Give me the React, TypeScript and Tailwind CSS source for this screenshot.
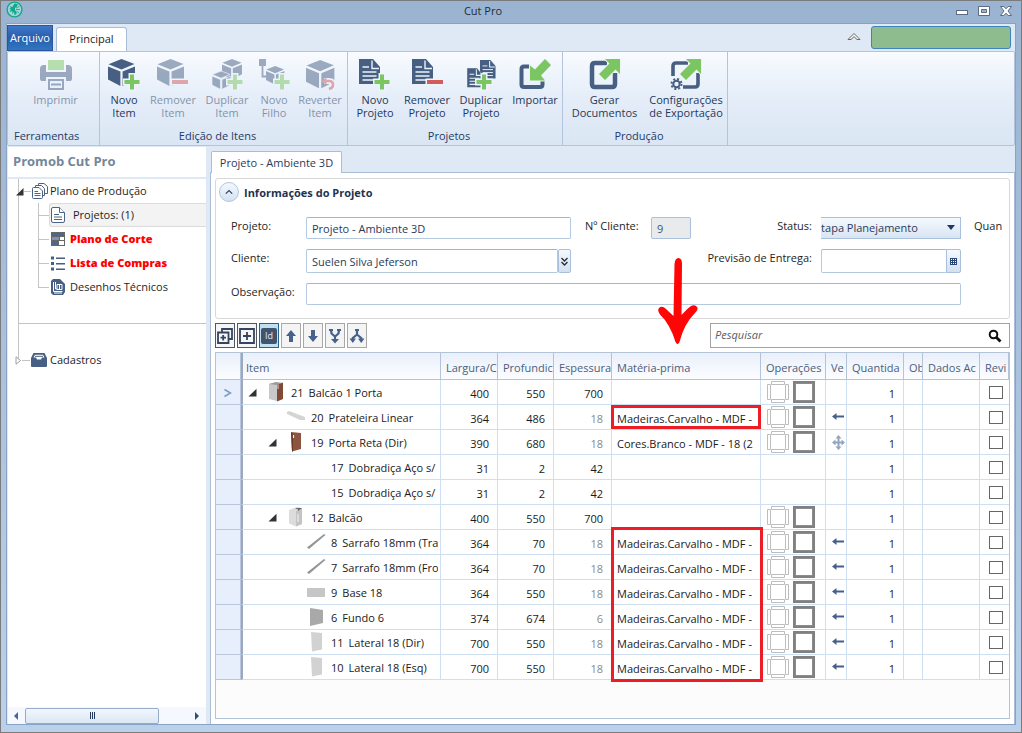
import React from "react";

const NAVY = "#465f82";
const GREEN = "#7cc662";
const RED = "#d25c5c";

function Plus({ x, y }: { x: number; y: number }) {
  return (
    <g transform={`translate(${x} ${y})`}>
      <path d="M-2 -7.5H2V-2H7.5V2H2V7.5H-2V2H-7.5V-2H-2Z" fill={GREEN} stroke="#edf3fb" strokeWidth="3" paintOrder="stroke" />
    </g>
  );
}

function Minus({ x, y }: { x: number; y: number }) {
  return <rect x={x} y={y} width="16" height="4" fill={RED} stroke="#edf3fb" strokeWidth="3" paintOrder="stroke" />;
}

function Cube({ t = "" }: { t?: string }) {
  return (
    <g transform={t} fill={NAVY}>
      <path d="M0.5 5.2L13.5 0L26.5 5L13.5 10.6Z" />
      <path d="M0 7.4L12.4 12.6V27L0 20.6Z" />
      <path d="M14.6 12.6L27 7.4V20.6L14.6 27Z" />
    </g>
  );
}

function Doc({ t = "" }: { t?: string }) {
  return (
    <g transform={t}>
      <path d="M0 0H14L21 8V25H0Z" fill={NAVY} />
      <path d="M13 1.5V9.5H20" fill="none" stroke="#edf3fb" strokeWidth="1.4" />
      <path d="M3.5 8H10M3.5 13H17.5M3.5 17H17.5M3.5 21H17.5" stroke="#edf3fb" strokeWidth="1.3" />
    </g>
  );
}

function BigIcon({ children }: { children: React.ReactNode }) {
  return (
    <svg className="h-8 w-8 shrink-0" viewBox="0 0 32 32" aria-hidden="true">
      {children}
    </svg>
  );
}

const icons = {
  print: (
    <BigIcon>
      <path d="M8 1H24V11H8Z" fill={GREEN} />
      <path d="M0 10Q0 6 4 6H6V13H26V6H28Q32 6 32 10V20Q32 22 30 22H26V18H6V22H2Q0 22 0 20Z" fill={NAVY} />
      <path d="M9 21H23V30H9Z" fill="none" stroke={NAVY} strokeWidth="2" />
      <path d="M11 25.5H21" stroke={NAVY} strokeWidth="2" />
    </BigIcon>
  ),
  newItem: (
    <BigIcon>
      <Cube />
      <Plus x={24} y={23} />
    </BigIcon>
  ),
  removeItem: (
    <BigIcon>
      <Cube />
      <Minus x={15} y={21} />
    </BigIcon>
  ),
  duplicateItem: (
    <BigIcon>
      <Cube t="translate(11 0) scale(0.74)" />
      <g stroke="#edf3fb" strokeWidth="1">
        <Cube t="translate(1 12) scale(0.68)" />
      </g>
      <Plus x={24} y={23} />
    </BigIcon>
  ),
  newChild: (
    <BigIcon>
      <rect x="1" y="0" width="7" height="7" fill={NAVY} />
      <path d="M4.5 7V17.5H9" fill="none" stroke={NAVY} strokeWidth="1.8" />
      <Cube t="translate(8 7) scale(0.68)" />
      <Plus x={24} y={23} />
    </BigIcon>
  ),
  revert: (
    <BigIcon>
      <Cube t="translate(2 1) scale(1.05)" />
      <path d="M20 22H25Q29 22 29 25.5Q29 29 25 30" fill="none" stroke="#edf3fb" strokeWidth="6" />
      <path d="M20 22H25Q29 22 29 25.5Q29 29 25 30" fill="none" stroke={RED} strokeWidth="2.6" />
      <path d="M22.5 18L17.5 22.2L22.5 26Z" fill={RED} />
    </BigIcon>
  ),
  newProject: (
    <BigIcon>
      <Doc />
      <Plus x={23} y={23} />
    </BigIcon>
  ),
  removeProject: (
    <BigIcon>
      <Doc t="translate(1 0)" />
      <Minus x={16} y={21} />
    </BigIcon>
  ),
  duplicateProject: (
    <BigIcon>
      <Doc t="translate(15 1) scale(0.74)" />
      <g stroke="#edf3fb" strokeWidth="0.6">
        <Doc t="translate(2 9) scale(0.72 0.78)" />
      </g>
      <Plus x={19} y={23} />
    </BigIcon>
  ),
  importIcon: (
    <BigIcon>
      <path d="M11 7.5H5Q2.5 7.5 2.5 10V25.5Q2.5 28 5 28H21Q23.5 28 23.5 25.5V21" fill="none" stroke={NAVY} strokeWidth="4" />
      <path d="M26 0L32 6L22 16.5L26 21.5H11V6.5L16 10.5Z" fill={GREEN} stroke="#edf3fb" strokeWidth="2" paintOrder="stroke" />
    </BigIcon>
  ),
  exportIcon: (
    <BigIcon>
      <path d="M18 4H6Q3 4 3 7V25Q3 28 6 28H23Q26 28 26 25V14" fill="none" stroke={NAVY} strokeWidth="4.5" />
      <path d="M16 0H31V15L26.5 10.5L16 21L10 15L20.5 4.5Z" fill={GREEN} stroke="#edf3fb" strokeWidth="2" paintOrder="stroke" />
    </BigIcon>
  ),
  exportConfig: (
    <BigIcon>
      <path d="M18 4H6Q3 4 3 7V17M13 28H25Q28 28 28 25V14" fill="none" stroke={NAVY} strokeWidth="3.6" />
      <path d="M16 0H31V15L26.5 10.5L16 21L10 15L20.5 4.5Z" fill={GREEN} stroke="#edf3fb" strokeWidth="2" paintOrder="stroke" />
      <circle cx="6.5" cy="25" r="3.2" fill="none" stroke={NAVY} strokeWidth="2" />
      <circle cx="6.5" cy="25" r="5" fill="none" stroke={NAVY} strokeWidth="2" strokeDasharray="2 1.93" />
    </BigIcon>
  ),
};

type Action = { icon: React.ReactNode; lines: string[]; width: string; disabled?: boolean };

const ribbon: { title: string; width: string; row: string; align: string; actions: Action[] }[] = [
  {
    title: "Ferramentas",
    width: "w-[92px]",
    row: "justify-center pl-1",
    align: "text-left pl-1.5",
    actions: [{ icon: icons.print, lines: ["Imprimir"], width: "w-[60px]", disabled: true }],
  },
  {
    title: "Edição de Itens",
    width: "w-[248px]",
    row: "",
    align: "text-center pr-3",
    actions: [
      { icon: icons.newItem, lines: ["Novo", "Item"], width: "w-[48px]" },
      { icon: icons.removeItem, lines: ["Remover", "Item"], width: "w-[50px]", disabled: true },
      { icon: icons.duplicateItem, lines: ["Duplicar", "Item"], width: "w-[58px]", disabled: true },
      { icon: icons.newChild, lines: ["Novo", "Filho"], width: "w-[36px]", disabled: true },
      { icon: icons.revert, lines: ["Reverter", "Item"], width: "w-[56px]", disabled: true },
    ],
  },
  {
    title: "Projetos",
    width: "w-[215px]",
    row: "",
    align: "text-center pr-3",
    actions: [
      { icon: icons.newProject, lines: ["Novo", "Projeto"], width: "w-[54px]" },
      { icon: icons.removeProject, lines: ["Remover", "Projeto"], width: "w-[50px]" },
      { icon: icons.duplicateProject, lines: ["Duplicar", "Projeto"], width: "w-[58px]" },
      { icon: icons.importIcon, lines: ["Importar"], width: "w-[50px]" },
    ],
  },
  {
    title: "Produção",
    width: "w-[165px]",
    row: "",
    align: "text-center pr-3",
    actions: [
      { icon: icons.exportIcon, lines: ["Gerar", "Documentos"], width: "w-[83px]" },
      { icon: icons.exportConfig, lines: ["Configurações", "de Exportação"], width: "w-[80px]" },
    ],
  },
];

function TitleBar() {
  return (
    <header className="grid h-[22px] shrink-0 grid-cols-[1fr_auto_1fr]">
      <svg className="h-[17px] w-[17px]" viewBox="0 0 17 17" aria-hidden="true">
        <circle cx="8.5" cy="8.5" r="7.4" fill="#a8d5d5" stroke="#12a78c" strokeWidth="1.4" />
        <path d="M8 3L9 2.6L12 3.5L10.5 6L9 7V9L11 12L8.5 14.5L8 11L6 13L6.5 10L3.5 11L5 8.5L2.8 8L5 7L3.5 5L6.5 6Z" fill="#12a78c" />
        <path d="M10 8.5H14M10 7L13.5 5.5M10.5 10L13 12" stroke="#12a78c" strokeWidth="0.8" />
      </svg>
      <h1 className="pr-14 text-[11px] leading-5 text-[#1e2c40]">Cut Pro</h1>
      <div className="flex justify-end gap-2 pt-0.5 pr-[3px]">
        <button aria-label="Minimizar" className="h-4 w-3.5">
          <svg viewBox="0 0 14 14" className="w-3.5" aria-hidden="true">
            <rect x="1.5" y="6.5" width="11" height="4" fill="#fff" stroke="#5d6b80" />
          </svg>
        </button>
        <button aria-label="Maximizar" className="h-4 w-3.5">
          <svg viewBox="0 0 14 14" className="w-3.5" aria-hidden="true">
            <path d="M1.5 2.5H12.5V11.5H1.5ZM4.5 5.5V8.5H9.5V5.5Z" fill="#fff" stroke="#5d6b80" fillRule="evenodd" />
          </svg>
        </button>
        <button aria-label="Fechar" className="h-4 w-3.5">
          <svg viewBox="0 0 14 14" className="w-3.5" aria-hidden="true">
            <path d="M1.5 2.5H4.8L7 4.8L9.2 2.5H12.5L9 7L12.5 11.5H9.2L7 9.2L4.8 11.5H1.5L5 7Z" fill="#fff" stroke="#5d6b80" />
          </svg>
        </button>
      </div>
    </header>
  );
}

function Ribbon() {
  return (
    <div className="shrink-0">
      <div className="flex h-[27px] items-end">
        <button className="h-[26px] w-[46px] border border-[#2b55a0] bg-linear-to-b from-[#3f78c8] via-[#2a5cae] to-[#2e78c0] text-[11px] text-white">
          Arquivo
        </button>
        <button className="ml-[3px] h-6 w-[71px] rounded-t-[3px] border border-b-0 border-[#a9bdd6] bg-white text-[11px] text-[#1e1e1e]">
          Principal
        </button>
        <div className="grow" />
        <button aria-label="Recolher faixa" className="mr-2.5 mb-2.5">
          <svg className="h-[9px] w-[14px]" viewBox="0 0 14 9" aria-hidden="true">
            <path d="M1 7.5L7 1.5L13 7.5H10L7 4.6L4 7.5Z" fill="#f4f4f4" stroke="#6b6b6b" />
          </svg>
        </button>
        <div className="mr-1 mb-[2px] h-[23px] w-[140px] rounded-[3px] border border-[#3d84bd] bg-[#8fbc8f]" />
      </div>
      <div className="flex h-[95px] rounded-[2px] border border-[#b3c5dc] bg-linear-to-b from-[#f8fbff] via-[#e4edf8] to-[#dbe6f4]">
        {ribbon.map((g) => (
          <section key={g.title} className={`flex shrink-0 flex-col border-r border-[#b3c5dc] ${g.width}`}>
            <div className={`flex h-[76px] pt-[7px] ${g.row}`}>
              {g.actions.map((a) => (
                <button
                  key={a.lines.join(" ")}
                  disabled={a.disabled}
                  className={`flex shrink-0 flex-col items-center gap-0.5 text-[11px] leading-[13px] whitespace-nowrap text-[#25395c] disabled:opacity-50 ${a.width}`}
                >
                  {a.icon}
                  <span className="flex flex-col items-center">
                    {a.lines.map((l) => (
                      <span key={l}>{l}</span>
                    ))}
                  </span>
                </button>
              ))}
            </div>
            <h2 className={`text-[11px] leading-[16px] text-[#1f3b66] ${g.align}`}>{g.title}</h2>
          </section>
        ))}
      </div>
    </div>
  );
}

const treeIcons = {
  docs: (
    <svg className="h-4 w-4" viewBox="0 0 16 16" fill="#fff" stroke="#4b6485" strokeWidth="1" aria-hidden="true">
      <path d="M6.5 .5H12L15.5 3.5V10.5H6.5Z" />
      <path d="M3.5 2.5H9.5L12.5 5.5V12.5H3.5Z" />
      <path d="M.5 5.5Q.5 4.5 1.5 4.5H7L10.5 8V14.5Q10.5 15.5 9.5 15.5H1.5Q.5 15.5 .5 14.5Z" />
      <path d="M2.5 8.5H6M2.5 10.5H8.5M2.5 12.5H8.5" />
    </svg>
  ),
  doc: (
    <svg className="h-4 w-4" viewBox="0 0 16 16" fill="#fff" stroke="#4b6485" strokeWidth="1" aria-hidden="true">
      <path d="M1.5 2Q1.5 .5 3 .5H9.5L14.5 5.5V14Q14.5 15.5 13 15.5H3Q1.5 15.5 1.5 14Z" />
      <path d="M9.5 .5V5.5H14.5M4 7.5H9M4 10H12M4 12.5H12" />
    </svg>
  ),
  cut: (
    <svg className="h-4 w-4" viewBox="0 0 16 16" aria-hidden="true">
      <rect x="1" y="1" width="14" height="14" fill="#666" />
      <rect x="2" y="2" width="12" height="3" fill="#4c6690" />
      <rect x="2" y="6" width="7" height="3" fill="#7d93b5" />
      <rect x="10" y="6" width="4" height="3" fill="#fff" />
      <rect x="2" y="10" width="6" height="4" fill="#4c6690" />
      <rect x="9" y="10" width="5" height="4" fill="#fff" />
    </svg>
  ),
  list: (
    <svg className="h-4 w-4" viewBox="0 0 16 16" fill={NAVY} aria-hidden="true">
      <path d="M1 1.5H4V4.5H1ZM1 7H4V10H1ZM1 12.5H4V15.5H1Z" />
      <path d="M6 2.5H15V4H6ZM6 8H15V9.5H6ZM6 13.5H15V15H6Z" />
    </svg>
  ),
  tech: (
    <svg className="h-4 w-4" viewBox="0 0 16 16" aria-hidden="true">
      <path d="M3 0H10L15 5V13L13 16H3L1 14V2Z" fill={NAVY} />
      <path d="M3.5 3V12.5H12.5M5.5 3V10H7M7 5.5H12V10.5H7ZM9.5 5.5V10M4 14H12" fill="none" stroke="#fff" strokeWidth="1" />
    </svg>
  ),
  box: (
    <svg className="h-4 w-4" viewBox="0 0 16 16" aria-hidden="true">
      <path d="M2.5 1H13.5L16 6V14Q16 15 15 15H1Q0 15 0 14V6Z" fill={NAVY} />
      <path d="M2.5 5.5L4 2.8H12L13.5 5.5H11L10 7.5H6L5 5.5Z" fill="#fff" />
      <path d="M4 4.3H12" stroke={NAVY} strokeWidth="1" />
    </svg>
  ),
};

const treeItems = [
  { icon: treeIcons.doc, label: "Projetos: (1)", cls: "border-[#dcdcdc] bg-[#f3f3f4] text-[#1e1e1e]", text: "pl-[3px]" },
  { icon: treeIcons.cut, label: "Plano de Corte", cls: "border-transparent text-[#ff0000] font-extrabold", text: "" },
  { icon: treeIcons.list, label: "Lista de Compras", cls: "border-transparent text-[#ff0000] font-extrabold", text: "" },
  { icon: treeIcons.tech, label: "Desenhos Técnicos", cls: "border-transparent text-[#1e1e1e]", text: "" },
];

function Sidebar() {
  return (
    <aside className="flex w-[198px] shrink-0 flex-col bg-white">
      <h2 className="flex h-8 items-center border-b-2 border-[#dfe9f5] pl-[5px] text-[13px] font-bold text-[#74879b]">
        Promob Cut Pro
      </h2>
      <nav className="relative grow text-[11px]">
        <div className="absolute top-0 left-[10px] h-[181px] w-px bg-[#c4c4c4]" />
        <div className="flex h-6 items-center pl-[7px]">
          <svg className="relative h-[9px] w-[9px]" viewBox="0 0 9 9" aria-hidden="true">
            <path d="M8.5 1V8.5H1Z" fill="#333" />
          </svg>
          <div className="h-px w-[7px] bg-[#c4c4c4]" />
          <span className="mr-0.5 ml-px">{treeIcons.docs}</span>
          <a href="#plano" className="text-[#1e1e1e]">
            Plano de Produção
          </a>
        </div>
        <div className="relative ml-[30px]">
          <div className="absolute top-0 left-0 h-[84px] w-px bg-[#c4c4c4]" />
          <ul>
            {treeItems.map((t) => (
              <li key={t.label} className="flex h-6 items-center">
                <div className="h-px w-[11px] shrink-0 bg-[#c4c4c4]" />
                <a href="#item" className={`flex h-6 grow items-center gap-1 rounded-l-[3px] border border-r-0 ${t.cls}`}>
                  {t.icon}
                  <span className={t.text}>{t.label}</span>
                </a>
              </li>
            ))}
          </ul>
        </div>
        <hr className="mt-6 ml-[10px] border-[#c4c4c4]" />
        <div className="mt-6 flex h-6 items-center pl-[7px]">
          <svg className="relative h-[9px] w-[7px]" viewBox="0 0 7 9" aria-hidden="true">
            <path d="M1 .8L5.5 4.5L1 8.2Z" fill="#fff" stroke="#a0a0a0" />
          </svg>
          <div className="h-px w-[8px] bg-[#c4c4c4]" />
          <span className="mr-[3px] ml-px">{treeIcons.box}</span>
          <a href="#cadastros" className="text-[#1e1e1e]">
            Cadastros
          </a>
        </div>
      </nav>
      <div className="flex h-[17px] items-center bg-[#f5f9ff]">
        <button aria-label="Rolar à esquerda" className="w-[17px] pl-1.5">
          <svg className="h-2 w-1" viewBox="0 0 4 8" aria-hidden="true">
            <path d="M4 0V8L0 4Z" fill="#4a6690" />
          </svg>
        </button>
        <div className="flex h-4 w-[134px] items-center justify-center gap-px rounded-[2px] border border-[#94abc9] bg-linear-to-b from-[#f2f7fd] to-[#dbe7f5]">
          <i className="h-[7px] w-px bg-[#223a63]" />
          <i className="h-[7px] w-px bg-[#223a63]" />
          <i className="h-[7px] w-px bg-[#223a63]" />
        </div>
        <button aria-label="Rolar à direita" className="ml-auto w-[11px]">
          <svg className="h-2 w-1" viewBox="0 0 4 8" aria-hidden="true">
            <path d="M0 0V8L4 4Z" fill="#2f4c7a" />
          </svg>
        </button>
      </div>
    </aside>
  );
}

const field = "w-full min-w-0 rounded-[2px] border border-[#b4c8df] border-t-[#9fb6d2] bg-white text-[11px] text-[#283c5a]";
const fieldLabel = "self-start leading-[18px] whitespace-nowrap text-[#1e1e1e]";

function ProjectInfo() {
  return (
    <section className="rounded-[3px] border border-[#d8d8d8] pb-[13px]">
      <div className="flex items-center gap-[5px] pt-[3px] pl-[3px]">
        <button
          aria-label="Recolher informações"
          className="flex h-5 w-5 items-center justify-center rounded-full border border-[#b4c5dd] bg-linear-to-b from-[#f3f8fe] to-[#d5e2f2]"
        >
          <svg className="h-1.5 w-2" viewBox="0 0 8 6" aria-hidden="true">
            <path d="M.8 4.6L4 1.6L7.2 4.6" fill="none" stroke="#2f4468" strokeWidth="1.3" />
          </svg>
        </button>
        <h3 className="pt-0.5 text-[11px] leading-4 font-bold text-[#1f3350]">Informações do Projeto</h3>
      </div>
      <form className="mt-[15px] grid grid-cols-[75px_minmax(0,265px)_80px_40px_minmax(130px,1fr)_140px_41px] gap-y-[10px] pr-[7px] pl-[15px] text-[11px]">
        <label htmlFor="projeto" className={fieldLabel}>
          Projeto:
        </label>
        <input id="projeto" defaultValue="Projeto - Ambiente 3D" className={`h-[22px] pl-[5px] ${field}`} />
        <label htmlFor="ncliente" className={`pl-[14px] ${fieldLabel}`}>
          Nº Cliente:
        </label>
        <input
          id="ncliente"
          defaultValue="9"
          disabled
          className="h-[22px] w-10 rounded-[2px] border border-[#a9c0dc] bg-[#e9eaec] pl-[5px] text-[11px] text-[#44546c]"
        />
        <label htmlFor="status" className={`pr-[9px] text-right ${fieldLabel}`}>
          Status:
        </label>
        <div className="relative h-[22px]">
          <select
            id="status"
            className="h-full w-full appearance-none border border-l-0 border-[#a9c0dc] bg-linear-to-b from-[#f4f9fe] to-[#d9e5f3] -indent-[6px] text-[11px] text-[#283c5a]"
          >
            <option>Etapa Planejamento</option>
          </select>
          <svg className="pointer-events-none absolute top-2 right-1.5 h-[5px] w-2" viewBox="0 0 8 5" aria-hidden="true">
            <path d="M0 0H8L4 5Z" fill="#1f3a68" />
          </svg>
        </div>
        <span className={`overflow-hidden pl-[13px] ${fieldLabel}`}>Quan</span>

        <label htmlFor="cliente" className={fieldLabel}>
          Cliente:
        </label>
        <div className="flex h-6">
          <input id="cliente" defaultValue="Suelen Silva Jeferson" className={`h-6 pl-[5px] ${field}`} />
          <button
            type="button"
            aria-label="Escolher cliente"
            className="flex h-6 w-[13px] shrink-0 items-center justify-center rounded-[2px] border border-[#a9c0dc] bg-linear-to-b from-[#f4f9fe] to-[#d3e0f0]"
          >
            <svg className="h-[9px] w-[7px] shrink-0" viewBox="0 0 7 9" fill="none" stroke="#2a2f3a" strokeWidth="1.4" aria-hidden="true">
              <path d="M.5 1L3.5 4L6.5 1M.5 5L3.5 8L6.5 5" />
            </svg>
          </button>
        </div>
        <label htmlFor="previsao" className={`col-span-3 pr-[9px] text-right ${fieldLabel}`}>
          Previsão de Entrega:
        </label>
        <div className="flex h-6">
          <input id="previsao" className={`h-6 pl-[5px] ${field}`} />
          <button
            type="button"
            aria-label="Abrir calendário"
            className="-ml-px flex h-6 w-[15px] shrink-0 items-center justify-center rounded-r-[2px] border border-[#a9c0dc] bg-linear-to-b from-[#f4f9fe] to-[#d3e0f0]"
          >
            <svg className="h-[7px] w-[7px]" viewBox="0 0 7 7" aria-hidden="true">
              <rect width="7" height="7" fill="#27477a" />
              <path d="M1 1h1v1H1zM3 1h1v1H3zM5 1h1v1H5zM1 3h1v1H1zM3 3h1v1H3zM5 3h1v1H5zM1 5h1v1H1zM3 5h1v1H3zM5 5h1v1H5z" fill="#fff" />
            </svg>
          </button>
        </div>
        <span />

        <label htmlFor="observacao" className={fieldLabel}>
          Observação:
        </label>
        <div className="col-span-5">
          <input id="observacao" className={`block h-[22px] pl-[5px] ${field}`} />
        </div>
      </form>
    </section>
  );
}

const toolSvg = "h-4 w-4 shrink-0";
const tools = [
  {
    label: "Expandir tudo",
    cls: "border-[#4e5866] bg-[#f6f6f6]",
    icon: (
      <svg className={toolSvg} viewBox="0 0 16 16" fill="none" stroke="#33455f" strokeWidth="1.8" aria-hidden="true">
        <path d="M5 4V1H15V11H12M1 4.5H11.5V15H1ZM6.2 7V12.5M3.5 9.7H9" />
      </svg>
    ),
  },
  {
    label: "Expandir",
    cls: "border-[#4e5866] bg-[#f6f6f6]",
    icon: (
      <svg className={toolSvg} viewBox="0 0 16 16" fill="none" stroke="#33455f" strokeWidth="1.8" aria-hidden="true">
        <path d="M1 1H15V15H1ZM8 4V12M4 8H12" />
      </svg>
    ),
  },
  {
    label: "Mostrar identificador",
    cls: "border-[#25638c] bg-[#bfe0f2]",
    icon: (
      <span className="flex h-4 w-4 shrink-0 items-center justify-center rounded-[2px] bg-[#41546e] text-[9px] leading-none text-[#e5edf5]">Id</span>
    ),
  },
  {
    label: "Mover para cima",
    cls: "border-[#a8a8a8] bg-[#f4f4f4]",
    icon: (
      <svg className={toolSvg} viewBox="1 1 16 16" fill="#46618b" aria-hidden="true">
        <path d="M9 3L14 9H11V15H7V9H4Z" />
      </svg>
    ),
  },
  {
    label: "Mover para baixo",
    cls: "border-[#a8a8a8] bg-[#f4f4f4]",
    icon: (
      <svg className={toolSvg} viewBox="1 1 16 16" fill="#46618b" aria-hidden="true">
        <path d="M9 15L14 9H11V3H7V9H4Z" />
      </svg>
    ),
  },
  {
    label: "Agrupar",
    cls: "border-[#a8a8a8] bg-[#f4f4f4]",
    icon: (
      <svg className={toolSvg} viewBox="1 1 16 16" fill="none" stroke="#46618b" aria-hidden="true">
        <path d="M5 3L5.5 6.5L9 9.5L12.5 6.5L13 3M9 9V13" strokeWidth="2.2" />
        <path d="M3 3H7M11 3H15" strokeWidth="1.8" />
        <path d="M5 12H13L9 16.5Z" fill="#46618b" stroke="none" />
      </svg>
    ),
  },
  {
    label: "Desagrupar",
    cls: "border-[#a8a8a8] bg-[#f4f4f4]",
    icon: (
      <svg className={toolSvg} viewBox="1 1 16 16" fill="none" stroke="#46618b" aria-hidden="true">
        <path d="M9 3V7.5L4.8 11V13M9 7.5L13.2 11V13" strokeWidth="2.2" />
        <path d="M7 3H11" strokeWidth="2" />
        <path d="M1.5 11.5H8L4.8 16ZM10 11.5H16.5L13.2 16Z" fill="#46618b" stroke="none" />
      </svg>
    ),
  },
];

function Toolbar() {
  return (
    <div className="relative flex h-[25px] items-center gap-0.5">
      {tools.map((t) => (
        <button key={t.label} aria-label={t.label} className={`flex h-[25px] w-5 shrink-0 items-center justify-center border ${t.cls}`}>
          {t.icon}
        </button>
      ))}
      <div className="ml-auto flex h-[25px] w-[300px] items-center border border-[#a3a3a3] bg-white pr-[7px] pl-1">
        <input aria-label="Pesquisar" placeholder="Pesquisar" className="min-w-0 grow text-[11px] placeholder:text-[#5c5c5c] placeholder:italic" />
        <svg className="h-3.5 w-3.5" viewBox="0 0 14 14" fill="none" stroke="#111" aria-hidden="true">
          <circle cx="5.5" cy="5.5" r="3.8" strokeWidth="2" />
          <path d="M8 8L12.5 12.5" strokeWidth="2.8" />
        </svg>
      </div>
      <svg className="pointer-events-none absolute right-[311px] bottom-px h-[92px] w-[42px]" viewBox="0 0 42 92" aria-hidden="true">
        <path
          d="M17.5 9Q18 3 21.5 3Q25 3 25 9L24.5 60Q32 52 34 51Q38 49 40.5 52.5Q41 55 38 58Q27 69 22.5 87Q20.500 91 18.5 87Q13 69 3 59.5Q0 55 2 53Q5 50 9 54L16.5 61Z"
          fill="#ff0505"
        />
      </svg>
    </div>
  );
}

const thumbs: Record<string, React.ReactNode> = {
  cabinetDoor: (
    <>
      <path d="M2 3L10 1V20L2 18Z" fill="#c9c9c9" />
      <path d="M2 3L9 1L16 2L10 4Z" fill="#9c9c9c" />
      <path d="M10 4L16 1.5V18L10 20.5Z" fill="#814a34" />
      <path d="M11 4V8" stroke="#ddd" />
    </>
  ),
  shelf: <path d="M0 6L2 5L18 11V14H13L0 8Z" fill="#d4d4d4" />,
  door: (
    <>
      <path d="M4 1L14 2V18L5 20.5Z" fill="#8c553f" />
      <path d="M4 1L6 3V20.5H5Z" fill="#693a28" />
      <path d="M6.5 4V7" stroke="#eee" strokeWidth="1.2" />
    </>
  ),
  cabinet: (
    <>
      <path d="M2 4L10 1L15 2V18L9 20.5L2 17.5Z" fill="#dcdcdc" />
      <path d="M9 5L15 2V18L9 20.5Z" fill="#c4c4c4" />
      <path d="M8 2L15 2L11 5V3.5Z" fill="#666" />
      <path d="M11 8V16" stroke="#f3f3f3" />
    </>
  ),
  batten: <path d="M0 16.5L17 3L18.5 4L2 18Z" fill="#959595" />,
  base: <path d="M0 7H18V16H0Z" fill="#c6c6c6" />,
  back: <path d="M3 2L16 4V17L3 20Z" fill="#a9a9a9" />,
  side: <path d="M4 1L15 2V18.5L5 20.5Z" fill="#d2d2d2" />,
};

type Row = {
  level: number;
  open?: boolean;
  thumb?: string;
  id: string;
  name: string;
  w: number;
  d: number;
  t: number;
  soft?: boolean;
  material?: string;
  ops?: boolean;
  grain?: "arrow" | "cross";
  mark?: "one" | "six";
};

const MDF = "Madeiras.Carvalho - MDF -";
const rows: Row[] = [
  { level: 0, open: true, thumb: "cabinetDoor", id: "21", name: "Balcão 1 Porta", w: 400, d: 550, t: 700, ops: true },
  { level: 1, thumb: "shelf", id: "20", name: "Prateleira Linear", w: 364, d: 486, t: 18, soft: true, material: MDF, ops: true, grain: "arrow", mark: "one" },
  { level: 1, open: true, thumb: "door", id: "19", name: "Porta Reta (Dir)", w: 390, d: 680, t: 18, soft: true, material: "Cores.Branco - MDF - 18 (2", ops: true, grain: "cross" },
  { level: 2, id: "17", name: "Dobradiça Aço s/", w: 31, d: 2, t: 42 },
  { level: 2, id: "15", name: "Dobradiça Aço s/", w: 31, d: 2, t: 42 },
  { level: 1, open: true, thumb: "cabinet", id: "12", name: "Balcão", w: 400, d: 550, t: 700, ops: true },
  { level: 2, thumb: "batten", id: "8", name: "Sarrafo 18mm (Tra", w: 364, d: 70, t: 18, soft: true, material: MDF, ops: true, grain: "arrow", mark: "six" },
  { level: 2, thumb: "batten", id: "7", name: "Sarrafo 18mm (Fro", w: 364, d: 70, t: 18, soft: true, material: MDF, ops: true, grain: "arrow" },
  { level: 2, thumb: "base", id: "9", name: "Base 18", w: 364, d: 550, t: 18, soft: true, material: MDF, ops: true, grain: "arrow" },
  { level: 2, thumb: "back", id: "6", name: "Fundo 6", w: 374, d: 674, t: 6, soft: true, material: MDF, ops: true, grain: "arrow" },
  { level: 2, thumb: "side", id: "11", name: "Lateral 18 (Dir)", w: 700, d: 550, t: 18, soft: true, material: MDF, ops: true, grain: "arrow" },
  { level: 2, thumb: "side", id: "10", name: "Lateral 18 (Esq)", w: 700, d: 550, t: 18, soft: true, material: MDF, ops: true, grain: "arrow" },
];

const columns = [
  { label: "", col: "w-[25px]" },
  { label: "Item", col: "w-[200px]" },
  { label: "Largura/C", col: "w-[57px]" },
  { label: "Profundic", col: "w-[56px]" },
  { label: "Espessura", col: "w-[58px]" },
  { label: "Matéria-prima", col: "" },
  { label: "Operações", col: "w-[65px]" },
  { label: "Ve", col: "w-[21px]" },
  { label: "Quantida", col: "w-[57px]" },
  { label: "Ob", col: "w-[19px]" },
  { label: "Dados Ac", col: "w-[57px]" },
  { label: "Revi", col: "w-[29px]" },
];

const indent = ["pl-[5px]", "pl-[25px]", "pl-[45px]"];
const cell = "h-[25px] border-r border-b border-[#cfdff2] p-0";
const numberCell = "pt-[3px] pr-2 text-right";

function Grain({ kind }: { kind: "arrow" | "cross" }) {
  return kind === "arrow" ? (
    <svg className="h-3 w-3" viewBox="0 0 12 12" aria-hidden="true">
      <path d="M0 5.5L4.5 2V4.5H12V6.5H4.5V9Z" fill="#45608a" />
    </svg>
  ) : (
    <svg className="h-[15px] w-[13px]" viewBox="0 0 13 15" aria-hidden="true">
      <path d="M6.5 0L9.5 3.5H7.5V6.5H9.5V4.5L13 7.5L9.5 10.5V8.5H7.5V11.5H9.5L6.5 15L3.5 11.5H5.5V8.5H3.5V10.5L0 7.5L3.5 4.5V6.5H5.5V3.5H3.5Z" fill="#93a5bf" />
    </svg>
  );
}

function ItemTable() {
  return (
    <div className="grow border border-[#b3c3d8] bg-[#fcfcfc]">
      <table className="w-full table-fixed border-separate border-spacing-0 bg-white text-[11px] leading-4 text-[#1a1a1a]">
        <colgroup>
          {columns.map((c, i) => (
            <col key={i} className={c.col} />
          ))}
        </colgroup>
        <thead>
          <tr>
            {columns.map((c, i) => (
              <th
                key={i}
                className={`h-[27px] overflow-hidden border-r border-b border-[#b3c3d8] bg-linear-to-b from-[#e9f0fb] to-[#fcfdff] p-0 pt-1 text-left font-normal text-[#4b5e7c] ${
                  i === 1 ? "border-l-2 border-l-[#9ba8bd]" : ""
                }`}
              >
                <div className={`overflow-hidden whitespace-nowrap ${i === 1 ? "ml-[3px]" : "ml-[5px]"}`}>{c.label}</div>
              </th>
            ))}
          </tr>
        </thead>
        <tbody>
          {rows.map((r, i) => (
            <tr key={r.id}>
              <td className="h-[25px] border-r border-b border-[#b9c6dc] bg-[#e7effc] p-0 text-center">
                {i === 0 && (
                  <svg className="inline-block h-2.5 w-2" viewBox="0 0 8 10" aria-hidden="true">
                    <path d="M.5 1.5L6.5 5L.5 8.5" fill="none" stroke="#7f9cc8" strokeWidth="1.6" />
                  </svg>
                )}
              </td>
              <td className={`${cell} border-l-2 border-l-[#9ba8bd]`}>
                <div className={`mr-0.5 flex h-6 items-center overflow-hidden whitespace-nowrap ${indent[r.level]}`}>
                  <svg className="h-[9px] w-[9px] shrink-0" viewBox="0 0 9 9" aria-hidden="true">
                    {r.open && <path d="M8.5 .8V8.5H.5Z" fill="#333" />}
                  </svg>
                  <span className="ml-1 flex w-[30px] shrink-0 justify-center">
                    {r.thumb && (
                      <svg className="h-[22px] w-[19px]" viewBox="0 0 19 22" aria-hidden="true">
                        {thumbs[r.thumb]}
                      </svg>
                    )}
                  </span>
                  <span className="mr-[5px] pt-px">{r.id}</span>
                  <span className="pt-px">{r.name}</span>
                </div>
              </td>
              <td className={`${cell} ${numberCell}`}>{r.w}</td>
              <td className={`${cell} ${numberCell}`}>{r.d}</td>
              <td className={`${cell} ${numberCell} ${r.soft ? "text-[#8a8a8a]" : ""}`}>{r.t}</td>
              <td className={`${cell} relative`}>
                <div className="mr-[3px] ml-[5px] overflow-hidden pt-[3px] whitespace-nowrap">{r.material}</div>
                {r.mark === "one" && <div className="pointer-events-none absolute top-0 -right-px -left-px h-6 border-[3px] border-[#ee1c25]" />}
                {r.mark === "six" && <div className="pointer-events-none absolute -top-[3px] -right-[3px] -left-px z-10 h-[155px] border-[3px] border-[#ee1c25]" />}
              </td>
              <td className={cell}>
                {r.ops && (
                  <div className="flex items-center gap-1 pl-1.5">
                    <svg className="h-[22px] w-[22px] shrink-0" viewBox="0 0 22 22" fill="#fff" stroke="#bdbdbd" aria-hidden="true">
                      <path d="M4.5 .5H17.5V3.5H4.5ZM4.500 18.5H17.5V21.5H4.5ZM.5 3.5H3.5V18.5H.5ZM18.5 3.5H21.5V18.5H18.5Z" />
                    </svg>
                    <svg className="h-[22px] w-[22px] shrink-0" viewBox="0 0 22 22" fill="#fff" aria-hidden="true">
                      <rect x="1.5" y="1.5" width="19" height="19" stroke="#808080" strokeWidth="3" />
                      <rect x="2.5" y="2.5" width="17" height="17" fill="none" stroke="#8c8c8c" />
                    </svg>
                  </div>
                )}
              </td>
              <td className={cell}>
                {r.grain && (
                  <div className="flex justify-center pl-1">
                    <Grain kind={r.grain} />
                  </div>
                )}
              </td>
              <td className={`${cell} ${numberCell}`}>1</td>
              <td className={cell} />
              <td className={cell} />
              <td className={`${cell} border-r-0`}>
                <input
                  type="checkbox"
                  aria-label={`Revisado ${r.id}`}
                  className="ml-[9px] block h-[13px] w-[14px] appearance-none border border-[#666] bg-white"
                />
              </td>
            </tr>
          ))}
        </tbody>
      </table>
    </div>
  );
}

export default function App() {
  return (
    <div className="flex min-h-screen flex-col border border-[#7b7b7b] bg-linear-to-b from-[#9ab3d0] to-[#b9d1ea] px-[5px] pb-[7px] font-['Open_Sans','Noto_Sans',sans-serif]">
      <TitleBar />
      <div className="flex grow flex-col border border-[#8ba3c1] bg-[#dfe9f5]">
        <Ribbon />
        <div className="flex grow pt-px pl-px">
          <Sidebar />
          <main className="ml-1 flex min-w-0 grow flex-col">
            <div className="relative z-10 -mb-px flex pt-1 pl-px">
              <button className="h-[22px] w-[131px] rounded-t-[2px] border border-b-0 border-[#a9bdd6] bg-white pt-px text-[11px] whitespace-nowrap text-[#283c5a]">
                Projeto - Ambiente 3D
              </button>
            </div>
            <div className="flex grow flex-col gap-1 border border-b-0 border-[#a9bdd6] bg-white px-1 pt-[5px] pb-[5px]">
              <ProjectInfo />
              <Toolbar />
              <ItemTable />
            </div>
          </main>
        </div>
      </div>
    </div>
  );
}
